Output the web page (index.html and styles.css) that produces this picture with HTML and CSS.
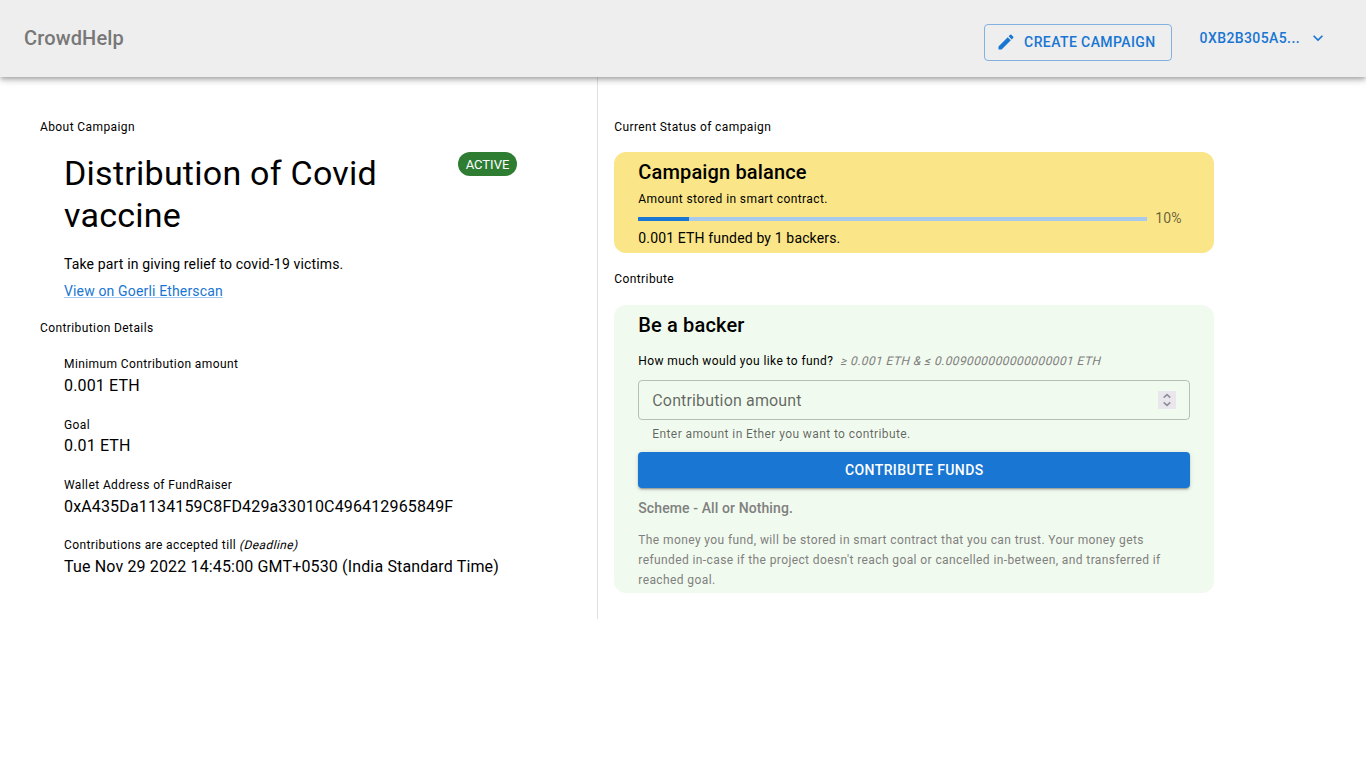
FILE: index.html
```html
<!DOCTYPE html>
<html lang="en">
<head>
<meta charset="utf-8">
<title>CrowdHelp</title>
<link rel="stylesheet" href="styles.css">
</head>
<body>
<header class="appbar">
  <div class="brand">CrowdHelp</div>
  <nav class="actions">
    <button class="btn btn-outlined"><svg class="icon" viewBox="0 0 24 24"><path d="M3 17.25V21h3.75L17.81 9.94l-3.75-3.75L3 17.25zM20.71 7.04c.39-.39.39-1.02 0-1.41l-2.34-2.34a.9959.9959 0 0 0-1.41 0l-1.83 1.83 3.75 3.75 1.83-1.83z"/></svg>Create Campaign</button>
    <button class="btn btn-text">0xB2B305A5...<svg class="icon" viewBox="0 0 24 24"><path d="M7.41 8.59 12 13.17l4.59-4.58L18 10l-6 6-6-6 1.41-1.41z"/></svg></button>
  </nav>
</header>
<main class="page">
  <section class="about">
    <div class="caption">About Campaign</div>
    <div class="intro">
      <div class="title-row">
        <h1 class="title">Distribution of Covid vaccine</h1>
        <span class="chip">ACTIVE</span>
      </div>
      <p class="body2 summary">Take part in giving relief to covid-19 victims.</p>
      <a class="body2 link">View on Goerli Etherscan</a>
    </div>
    <div class="caption">Contribution Details</div>
    <div class="details">
      <div class="detail"><div class="caption">Minimum Contribution amount</div><div class="body1">0.001 ETH</div></div>
      <div class="detail goal"><div class="caption">Goal</div><div class="body1">0.01 ETH</div></div>
      <div class="detail wallet"><div class="caption">Wallet Address of FundRaiser</div><div class="body1">0xA435Da1134159C8FD429a33010C496412965849F</div></div>
      <div class="detail"><div class="caption">Contributions are accepted till <span class="slant">(Deadline)</span></div><div class="body1">Tue Nov 29 2022 14:45:00 GMT+0530 (India Standard Time)</div></div>
    </div>
  </section>
  <section class="status">
    <div class="caption">Current Status of campaign</div>
    <div class="card balance">
      <h2 class="h6">Campaign balance</h2>
      <div class="caption">Amount stored in smart contract.</div>
      <div class="progress-row">
        <div class="track"><div class="bar" style="width:10%"></div></div>
        <div class="body2 percent">10%</div>
      </div>
      <div class="body2">0.001 ETH funded by 1 backers.</div>
    </div>
    <div class="caption">Contribute</div>
    <div class="card backer">
      <h2 class="h6">Be a backer</h2>
      <div class="caption question"><span>How much would you like to fund?</span><span class="limits slant">≥ 0.001 ETH &amp; ≤ 0.009000000000000001 ETH</span></div>
      <div class="field">
        <span class="body1">Contribution amount</span>
        <svg class="spinner" viewBox="0 0 18 18"><path d="M5.7 6.6 9 3.6l3.3 3M5.7 11.4l3.3 3 3.3-3"/></svg>
      </div>
      <div class="caption helper">Enter amount in Ether you want to contribute.</div>
      <button class="btn btn-contained">Contribute Funds</button>
      <div class="scheme">Scheme - All or Nothing.</div>
      <p class="caption note">The money you fund, will be stored in smart contract that you can trust. Your money gets refunded in-case if the project doesn't reach goal or cancelled in-between, and transferred if reached goal.</p>
    </div>
  </section>
</main>
</body>
</html>
```
FILE: styles.css
```css
* { box-sizing: border-box; }
body { margin: 0; font-family: Roboto, sans-serif; color: #000; background: #fff; -webkit-font-smoothing: antialiased; }
h1, h2, p { margin: 0; }

.caption { font-size: 12px; line-height: 20px; letter-spacing: 0.03333em; }
.body1 { font-size: 16px; line-height: 24px; letter-spacing: 0.00938em; }
.body2 { font-size: 14px; line-height: 20px; letter-spacing: 0.01071em; }
.h6 { font-size: 20px; font-weight: 500; line-height: 32px; letter-spacing: 0.0075em; }
.slant { display: inline-block; transform: skewX(-14deg); }

.appbar {
  display: flex; justify-content: space-between; align-items: flex-start;
  height: 77px; padding: 0 24px; background: #eee;
  box-shadow: 0 2px 4px -1px rgba(0,0,0,.2), 0 4px 5px rgba(0,0,0,.14), 0 1px 10px rgba(0,0,0,.12);
  position: relative;
}
.brand { padding-top: 22px; font-size: 20px; font-weight: 500; line-height: 32px; letter-spacing: 0.0075em; color: #777; }
.actions { display: flex; align-items: flex-start; gap: 20px; padding-right: 10px; }
.btn {
  display: inline-flex; align-items: center; justify-content: center; border: 0; border-radius: 4px;
  font: 500 14px/24.5px Roboto, sans-serif; letter-spacing: 0.02857em; text-transform: uppercase;
  color: #1976d2; background: transparent;
}
.icon { width: 20px; height: 20px; fill: currentColor; }
.btn-outlined { margin-top: 24px; padding: 5px 15px; border: 1px solid rgba(25,118,210,.5); }
.btn-outlined .icon { margin: 0 8px 0 -4px; }
.btn-text { margin-top: 20px; padding: 6px 8px; }
.btn-text .icon { margin: 0 -4px 0 8px; }

.page { display: grid; grid-template-columns: 598px 616.3px; height: 542px; }
.about { padding: 40px 80px 0 40px; border-right: 1px solid #e0e0e0; }
.intro { padding: 15px 0 17px 24px; }
.title-row { display: flex; justify-content: space-between; align-items: flex-start; }
.title { width: 340px; font-size: 34px; font-weight: 400; line-height: 42px; letter-spacing: 0.00735em; }
.chip { width: 59px; height: 24px; text-align: center; border-radius: 12px; background: #2e7d32; color: #fff; font-size: 13px; line-height: 26px; }
.summary { margin: 18px 0 7px; }
.link { display: inline-block; color: #1976d2; text-decoration: underline; text-decoration-color: rgba(25,118,210,.4); }
.details { display: grid; gap: 16px; padding: 16px 0 0 24px; }
.detail { white-space: nowrap; }
.goal, .wallet { margin-top: 1px; }
.goal .caption { height: 19px; }

.status { padding: 40px 0 0 16.3px; }
.card { padding: 4px 24px; border-radius: 12px; }
.balance { margin: 15px 0 16px; height: 101px; background: #fae588; }
.balance .caption { margin-top: 1px; }
.progress-row { display: flex; align-items: center; height: 19px; }
.track { width: 509px; height: 4px; margin-top: 1px; background: #a7caed; }
.bar { height: 4px; background: #1976d2; }
.percent { margin: -2px 0 0 8px; color: rgba(0,0,0,.6); }
.backer { margin-top: 16px; height: 288px; background: #f1faee; }
.question { display: flex; gap: 8px; margin-top: 10px; }
.limits { color: #808080; }
.field {
  display: flex; align-items: center; justify-content: space-between; height: 40px; margin: 9px 0 4px; padding: 0 13px;
  border: 1px solid #b8beb7; border-radius: 4px; color: rgba(0,0,0,.6);
}
.field .body1 { padding-top: 1px; }
.spinner { width: 18px; height: 18px; background: #e9e7ec; fill: none; stroke: #8f8d9c; stroke-width: 1.6; }
.helper { padding-left: 14px; color: rgba(0,0,0,.6); }
.btn-contained {
  width: 100%; height: 36px; margin-top: 8px; color: #fff; background: #1976d2;
  box-shadow: 0 3px 1px -2px rgba(0,0,0,.2), 0 2px 2px rgba(0,0,0,.14), 0 1px 5px rgba(0,0,0,.12);
}
.scheme { margin-top: 9px; font-size: 14px; font-weight: 500; line-height: 22px; letter-spacing: 0.00714em; color: #808080; }
.note { margin-top: 11px; color: #808080; }
```
